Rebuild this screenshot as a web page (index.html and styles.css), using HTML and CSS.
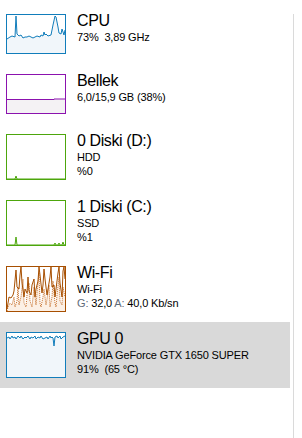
FILE: index.html
```html
<!DOCTYPE html>
<html>
<head>
    <meta charset="utf-8">
    <title>Performans</title>
    <link rel="stylesheet" href="styles.css">
</head>
<body>
<div class="app">
    <div class="perf-list">

        <div class="item">
            <div class="graph graph-cpu">
                <svg viewBox="0 0 58 38" preserveAspectRatio="none">
                    <polygon class="area" points="0,24 3,22 5,21 8,22 9,1 10,19 12,21 14,20 16,23 18,22 20,22 22,21 24,22 26,23 28,22 30,21 33,22 34,20 36,21 37,17 38,20 39,19 41,21 44,20 46,10 48,1 49,2 51,12 52,18 54,19 55,14 57,20 58,15 58,38 0,38"/>
                    <polyline class="line" points="0,24 3,22 5,21 8,22 9,1 10,19 12,21 14,20 16,23 18,22 20,22 22,21 24,22 26,23 28,22 30,21 33,22 34,20 36,21 37,17 38,20 39,19 41,21 44,20 46,10 48,1 49,2 51,12 52,18 54,19 55,14 57,20 58,15"/>
                </svg>
            </div>
            <div class="info">
                <div class="title">CPU</div>
                <div class="sub">73%&nbsp; 3,89 GHz</div>
            </div>
        </div>

        <div class="item">
            <div class="graph graph-mem">
                <svg viewBox="0 0 58 38" preserveAspectRatio="none">
                    <polygon class="area" points="0,24.5 47,24.5 47,24 58,24 58,38 0,38"/>
                    <polyline class="line" points="0,24.5 47,24.5 47,24 58,24"/>
                </svg>
            </div>
            <div class="info">
                <div class="title">Bellek</div>
                <div class="sub">6,0/15,9 GB (38%)</div>
            </div>
        </div>

        <div class="item tall">
            <div class="graph graph-disk">
                <svg viewBox="0 0 58 44" preserveAspectRatio="none">
                    <polygon class="area" points="0,44 8,44 9,41 10,44 58,44"/>
                    <polyline class="line" points="0,44 8,44 9,41 10,44 58,44"/>
                </svg>
            </div>
            <div class="info">
                <div class="title">0 Diski (D:)</div>
                <div class="sub">HDD</div>
                <div class="sub">%0</div>
            </div>
        </div>

        <div class="item tall">
            <div class="graph graph-disk">
                <svg viewBox="0 0 58 44" preserveAspectRatio="none">
                    <polygon class="area" points="0,44 8,44 9,36 10,44 47,44 48,42 49,44 51,44 52,42 53,44 55,44 56,41 57,44 58,44"/>
                    <polyline class="line" points="0,44 8,44 9,36 10,44 47,44 48,42 49,44 51,44 52,42 53,44 55,44 56,41 57,44 58,44"/>
                </svg>
            </div>
            <div class="info">
                <div class="title">1 Diski (C:)</div>
                <div class="sub">SSD</div>
                <div class="sub">%1</div>
            </div>
        </div>

        <div class="item tall">
            <div class="graph graph-wifi">
                <svg viewBox="0 0 58 44" preserveAspectRatio="none">
                    <polygon class="area" points="0,44 1,40 3,36 5,38 7,30 8,40 10,34 11,20 12,38 14,30 16,12 17,36 19,40 20,28 22,16 23,34 25,40 26,30 27,20 29,38 30,26 32,6 33,36 34,40 36,30 37,22 39,38 40,32 42,18 43,40 45,30 46,14 48,36 49,40 50,28 52,10 53,34 55,38 56,20 58,30 58,44"/>
                    <polyline class="dots" points="0,44 1,40 3,36 5,38 7,30 8,40 10,34 11,20 12,38 14,30 16,12 17,36 19,40 20,28 22,16 23,34 25,40 26,30 27,20 29,38 30,26 32,6 33,36 34,40 36,30 37,22 39,38 40,32 42,18 43,40 45,30 46,14 48,36 49,40 50,28 52,10 53,34 55,38 56,20 58,30"/>
                    <polyline class="line" points="0,42 2,30 4,31 6,28 7,24 9,3 10,20 12,22 13,8 14,0 15,16 17,30 18,22 20,26 21,10 22,24 24,28 25,18 27,12 28,30 29,22 31,14 32,0 33,8 35,26 36,18 37,2 38,12 40,28 41,22 43,10 44,0 45,20 47,18 48,30 50,14 51,6 52,0 53,16 55,30 56,4 57,0 58,12"/>
                </svg>
            </div>
            <div class="info">
                <div class="title">Wi-Fi</div>
                <div class="sub">Wi-Fi</div>
                <div class="sub"><span class="muted">G:</span> 32,0 <span class="muted">A:</span> 40,0 Kb/sn</div>
            </div>
        </div>

        <div class="item tall selected">
            <div class="graph graph-gpu">
                <svg viewBox="0 0 58 44" preserveAspectRatio="none">
                    <polygon class="area" points="0,5 2,4 3,6 5,3 6,5 8,4 9,6 11,3 13,5 14,3 16,6 18,4 19,5 21,3 23,6 24,4 26,5 28,3 29,6 31,4 33,5 34,3 36,6 38,5 40,4 41,6 43,3 44,5 45,4 46,5 47,13 48,4 50,3 51,5 53,3 54,6 56,4 58,3 58,44 0,44"/>
                    <polyline class="line" points="0,5 2,4 3,6 5,3 6,5 8,4 9,6 11,3 13,5 14,3 16,6 18,4 19,5 21,3 23,6 24,4 26,5 28,3 29,6 31,4 33,5 34,3 36,6 38,5 40,4 41,6 43,3 44,5 45,4 46,5 47,13 48,4 50,3 51,5 53,3 54,6 56,4 58,3"/>
                </svg>
            </div>
            <div class="info">
                <div class="title">GPU 0</div>
                <div class="sub">NVIDIA GeForce GTX 1650 SUPER</div>
                <div class="sub">91%&nbsp; (65 °C)</div>
            </div>
        </div>

    </div>
    <div class="divider"></div>
</div>
</body>
</html>
```

FILE: styles.css
```css
html, body {
    margin: 0;
    padding: 0;
    background: #ffffff;
}
.app {
    display: flex;
    height: 438px;
    font-family: "Liberation Sans", Arial, sans-serif;
    color: #000000;
}
.perf-list {
    width: 290px;
    padding-top: 4px;
}
.divider {
    width: 1px;
    margin: 14px 0 0 3px;
    background-color: #dadada;
}
.item {
    display: flex;
    gap: 11px;
    padding: 10px 0 10px 6px;
}
.item.selected {
    background-color: #d9d9d9;
}
.graph {
    width: 60px;
    height: 40px;
    box-sizing: border-box;
    border: 1px solid;
    background-color: #ffffff;
}
.item.tall .graph {
    height: 46px;
}
.graph svg {
    display: block;
    width: 100%;
    height: 100%;
}
.graph .line,
.graph .dots {
    fill: none;
    stroke-width: 1;
    vector-effect: non-scaling-stroke;
}
.graph .dots {
    stroke-dasharray: 1 1;
}
.graph-cpu,
.graph-gpu {
    border-color: #117dbb;
}
.graph-cpu .line,
.graph-gpu .line {
    stroke: #117dbb;
}
.graph-cpu .area,
.graph-gpu .area {
    fill: #f1f6fa;
}
.graph-mem {
    border-color: #8b12ae;
}
.graph-mem .line {
    stroke: #8b12ae;
}
.graph-mem .area {
    fill: #f4f2f4;
}
.graph-disk {
    border-color: #4da60c;
}
.graph-disk .line {
    stroke: #4da60c;
}
.graph-disk .area {
    fill: #eff7e9;
}
.graph-wifi {
    border-color: #a74f01;
}
.graph-wifi .line {
    stroke: #a74f01;
}
.graph-wifi .dots {
    stroke: #c8702a;
}
.graph-wifi .area {
    fill: #fcf0e5;
}
.info {
    margin-top: -2px;
}
.title {
    font-size: 16px;
    line-height: 18px;
    letter-spacing: -0.4px;
}
.sub {
    font-size: 11px;
    line-height: 14px;
    letter-spacing: -0.15px;
    white-space: nowrap;
}
.muted {
    color: #5f6b7a;
}
```
